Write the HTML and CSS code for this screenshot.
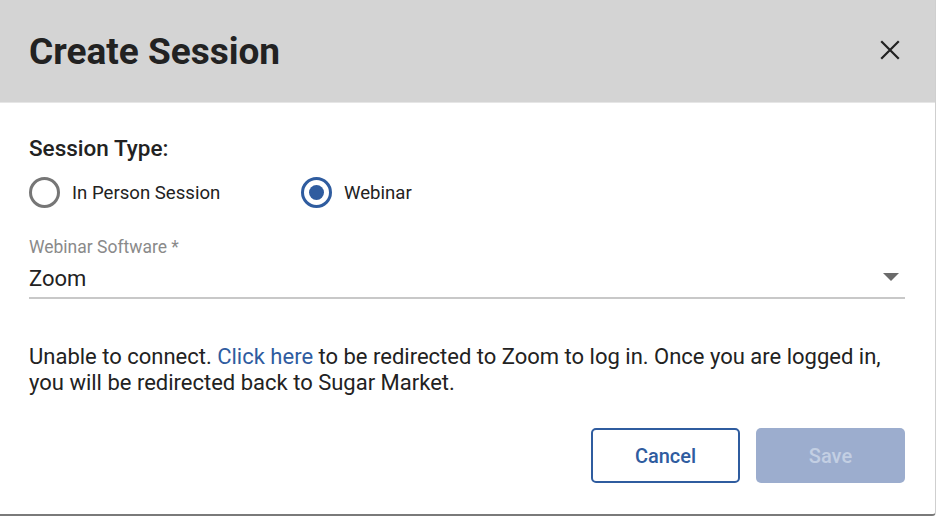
FILE: index.html
```html
<!DOCTYPE html>
<html>
<head>
<meta charset="utf-8">
<link rel="stylesheet" href="styles.css">
</head>
<body>
<div class="dialog">
  <header class="dialog-header">
    <h1 class="title">Create Session</h1>
    <button class="close" aria-label="Close">
      <svg width="20" height="20" viewBox="0 0 20 20"><path d="M2 2 L18 18 M18 2 L2 18" stroke="#222" stroke-width="2.2" stroke-linecap="square"/></svg>
    </button>
  </header>
  <main class="dialog-body">
    <div class="section-label">Session Type:</div>
    <div class="radio-row">
      <label class="radio">
        <span class="radio-circle"></span>
        <span class="radio-text">In Person Session</span>
      </label>
      <label class="radio selected">
        <span class="radio-circle"><span class="radio-dot"></span></span>
        <span class="radio-text">Webinar</span>
      </label>
    </div>
    <div class="field">
      <div class="field-label">Webinar Software *</div>
      <div class="select">
        <span class="select-value">Zoom</span>
        <svg class="caret" width="16" height="8" viewBox="0 0 16 8"><path d="M0 0 H16 L8 8 Z" fill="#6b6b6b"/></svg>
      </div>
    </div>
    <p class="message">Unable to connect. <a class="link" href="#">Click here</a> to be redirected to Zoom to log in. Once you are logged in, you will be redirected back to Sugar Market.</p>
    <div class="actions">
      <button class="btn btn-outline">Cancel</button>
      <button class="btn btn-disabled">Save</button>
    </div>
  </main>
</div>
</body>
</html>
```
FILE: styles.css
```css
* { box-sizing: border-box; }
html, body { margin: 0; padding: 0; background: #ffffff; }
body {
  font-family: Roboto, "Liberation Sans", Arial, sans-serif;
  color: #222222;
}
.dialog {
  width: 936px;
  height: 516px;
  background: #ffffff;
  border-bottom: 2px solid #7a7a7a;
  border-right: 1px solid #cfcfcf;
  border-bottom-right-radius: 4px;
  display: flex;
  flex-direction: column;
}
.dialog-header {
  height: 103px;
  flex: none;
  background: #d4d4d4;
  border-bottom: 1px solid #e6e6e6;
  display: flex;
  align-items: center;
  justify-content: space-between;
  padding: 0 35px 0 29px;
}
.title {
  margin: 0;
  font-size: 37px;
  font-weight: 700;
  color: #222222;
  line-height: 44px;
  padding-top: 2px;
}
.close {
  border: 0;
  background: transparent;
  padding: 0;
  width: 20px;
  height: 20px;
  display: flex;
  margin-bottom: 2px;
}
.dialog-body {
  padding: 32px 30px 0 29px;
  display: flex;
  flex-direction: column;
}
.section-label {
  font-size: 22.5px;
  font-weight: 500;
  line-height: 26px;
}
.radio-row {
  display: flex;
  margin-top: 16px;
}
.radio {
  display: flex;
  align-items: center;
  gap: 12px;
}
.radio:first-child { width: 272px; }
.radio-circle {
  width: 31px;
  height: 31px;
  border-radius: 50%;
  border: 3px solid #767676;
  display: flex;
  align-items: center;
  justify-content: center;
}
.radio.selected .radio-circle { border-color: #2f5c9f; }
.radio-dot {
  width: 15px;
  height: 15px;
  border-radius: 50%;
  background: #2f5c9f;
}
.radio-text {
  font-size: 18.6px;
  line-height: 22px;
  color: #222222;
}
.field { margin-top: 29px; }
.field-label {
  font-size: 17.5px;
  line-height: 20px;
  color: #8a8a8a;
}
.select {
  display: flex;
  align-items: center;
  justify-content: space-between;
  height: 42px;
  padding: 4px 6px 0 0;
  border-bottom: 2px solid #c8c8c8;
}
.select-value {
  font-size: 22px;
  line-height: 26px;
  color: #222222;
}
.caret { margin-bottom: 5px; }
.message {
  margin: 45px 0 0 0;
  font-size: 22px;
  line-height: 26px;
  color: #222222;
}
.link { color: #2f5c9f; text-decoration: none; }
.actions {
  display: flex;
  justify-content: flex-end;
  gap: 16px;
  margin-top: 32px;
}
.btn {
  width: 149px;
  height: 55px;
  border-radius: 5px;
  font-family: Roboto, "Liberation Sans", Arial, sans-serif;
  font-size: 20px;
  font-weight: 500;
}
.btn-outline {
  background: #ffffff;
  border: 2px solid #2f5c9f;
  color: #2f5c9f;
}
.btn-disabled {
  background: #9cadce;
  border: 0;
  color: #c3cfe3;
}
```
